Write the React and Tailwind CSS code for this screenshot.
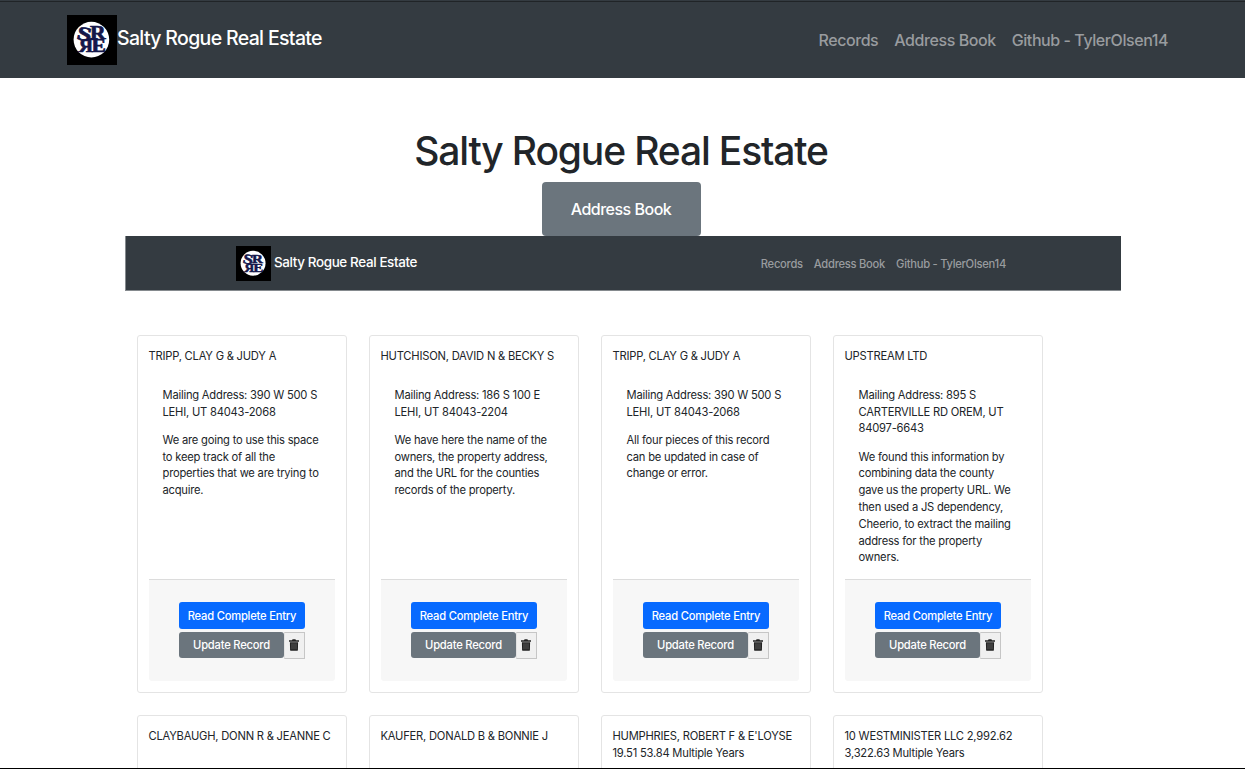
import React from "react";

const records = [
  {
    name: ["TRIPP, CLAY G & JUDY A"],
    address: ["Mailing Address: 390 W 500 S", "LEHI, UT 84043-2068"],
    note: ["We are going to use this space", "to keep track of all the", "properties that we are trying to", "acquire."],
  },
  {
    name: ["HUTCHISON, DAVID N & BECKY S"],
    address: ["Mailing Address: 186 S 100 E", "LEHI, UT 84043-2204"],
    note: ["We have here the name of the", "owners, the property address,", "and the URL for the counties", "records of the property."],
  },
  {
    name: ["TRIPP, CLAY G & JUDY A"],
    address: ["Mailing Address: 390 W 500 S", "LEHI, UT 84043-2068"],
    note: ["All four pieces of this record", "can be updated in case of", "change or error."],
  },
  {
    name: ["UPSTREAM LTD"],
    address: ["Mailing Address: 895 S", "CARTERVILLE RD OREM, UT", "84097-6643"],
    note: [
      "We found this information by",
      "combining data the county",
      "gave us the property URL. We",
      "then used a JS dependency,",
      "Cheerio, to extract the mailing",
      "address for the property",
      "owners.",
    ],
  },
];

const nextRecords = [
  ["CLAYBAUGH, DONN R & JEANNE C"],
  ["KAUFER, DONALD B & BONNIE J"],
  ["HUMPHRIES, ROBERT F & E'LOYSE", "19.51 53.84 Multiple Years"],
  ["10 WESTMINISTER LLC 2,992.62", "3,322.63 Multiple Years"],
];

function Logo({ className }) {
  return (
    <svg viewBox="0 0 50 50" className={className}>
      <rect width="50" height="50" fill="#000" />
      <circle cx="24.4" cy="24.6" r="17.8" fill="#fff" />
      <g fill="#14174a" fontFamily="Liberation Serif, serif" fontWeight="700" fontSize="18" stroke="#14174a" strokeWidth="0.7">
        <text transform="translate(9 24) rotate(12) scale(1.45 1.1)">S</text>
        <text transform="translate(23 24.2) scale(1.2 1.05)">R</text>
        <text transform="translate(26 37) scale(-1.1 1.05)">R</text>
        <text transform="translate(24.6 37) scale(1.2 1.05)">E</text>
      </g>
    </svg>
  );
}

function TrashIcon() {
  return (
    <svg viewBox="0 0 12 12" className="-mt-px -ml-px h-3 w-3">
      <path d="M1 1.2h3l.6-.9h2.8l.6.9h3v1.6H1z" fill="#222" />
      <path d="M1.9 3.2h8.2l-.2 7.7q-.1.9-.9.9H3q-.8 0-.9-.9z" fill="#222" />
      <path d="M4 4.3v6M6 4.3v6M8 4.3v6" stroke="#858585" strokeWidth=".6" />
    </svg>
  );
}

function Lines({ lines, className }) {
  return (
    <p className={className}>
      {lines.map((line, i) => (
        <span key={i} className="block whitespace-nowrap">{line}</span>
      ))}
    </p>
  );
}

function RecordCard({ record }) {
  return (
    <article className="flex h-[358px] w-[210px] flex-col rounded-[3px] border border-[#e4e4e4] px-[11px] pt-3 pb-[11px]">
      <Lines lines={record.name} className="-ml-[0.5px]" />
      <div className="flex-1 px-[13.5px] pt-[22px]">
        <Lines lines={record.address} />
        <Lines lines={record.note} className="mt-[11.4px]" />
      </div>
      <div className="flex h-[102px] flex-col items-center rounded-b-[3px] border-t border-[#dcdcdc] bg-[#f7f7f7] pt-[22px] font-[450] text-white">
        <button className="h-[27px] w-[126px] rounded-[3px] bg-[#076aff] pt-px whitespace-nowrap">Read Complete Entry</button>
        <div className="mt-[3px] flex h-[27px] w-[126px]">
          <button className="h-[26px] w-[105px] rounded-[3px] bg-[#6b757d] whitespace-nowrap">Update Record</button>
          <button className="flex flex-1 items-center justify-center border border-[#c6c6c6] border-l-[#e2e2e2] bg-[#f0f0f0]">
            <TrashIcon />
          </button>
        </div>
      </div>
    </article>
  );
}

export default function App() {
  return (
    <div className="flex h-[769px] w-[1245px] flex-col overflow-hidden border-b border-black bg-white font-['Inter',sans-serif] font-[450] text-[#212529]">
      <nav className="flex h-[78px] shrink-0 flex-col bg-[#343b41]">
        <div className="mt-px h-px bg-[#202427]" />
        <div className="flex flex-1 items-center justify-between pr-[77px] pl-[67px]">
          <div className="flex items-center text-white">
            <Logo className="h-[50px] w-[50px]" />
            <span className="-mt-[3px] text-[19.5px] tracking-[-0.66px] whitespace-nowrap">Salty Rogue Real Estate</span>
          </div>
          <div className="flex gap-4 text-[16px] tracking-[-0.43px] whitespace-nowrap text-[#999c9f]">
            <a>Records</a>
            <a>Address Book</a>
            <a>Github - TylerOlsen14</a>
          </div>
        </div>
      </nav>

      <header className="flex h-[158px] shrink-0 flex-col items-center pr-[3px] pt-[49px]">
        <h1 className="h-[55px] text-[39px] leading-[48px] font-[550] tracking-[-1.15px] whitespace-nowrap">Salty Rogue Real Estate</h1>
        <button className="h-[54px] w-[159px] rounded-[4px] bg-[#6b757d] text-[16px] tracking-[-0.5px] text-white">Address Book</button>
      </header>

      <main className="ml-[125px] w-[996px] flex-1 overflow-hidden text-[11.2px] leading-[16.8px] font-normal tracking-[-0.22px]">
        <div className="flex h-[55px] items-center justify-between border-b border-l border-[#858a8e] bg-[#343b41] pr-[115px] pl-[110px]">
          <div className="flex items-center gap-[3px] text-white">
            <Logo className="h-[35px] w-[35px]" />
            <span className="-mt-px text-[13.4px] font-[450] tracking-[-0.35px] whitespace-nowrap">Salty Rogue Real Estate</span>
          </div>
          <div className="flex gap-[11px] pt-[2px] font-[450] tracking-[-0.27px] whitespace-nowrap text-[#999c9f]">
            <a>Records</a>
            <a>Address Book</a>
            <a>Github - TylerOlsen14</a>
          </div>
        </div>
        <section className="grid grid-cols-[repeat(4,210px)] gap-[22px] pt-11 pl-[12px]">
          {records.map((record, i) => (
            <RecordCard key={i} record={record} />
          ))}
          {nextRecords.map((name, i) => (
            <article key={i} className="h-[100px] rounded-[3px] border border-[#e4e4e4] px-[11px] pt-3">
              <Lines lines={name} className="-ml-[0.5px]" />
            </article>
          ))}
        </section>
      </main>
    </div>
  );
}
